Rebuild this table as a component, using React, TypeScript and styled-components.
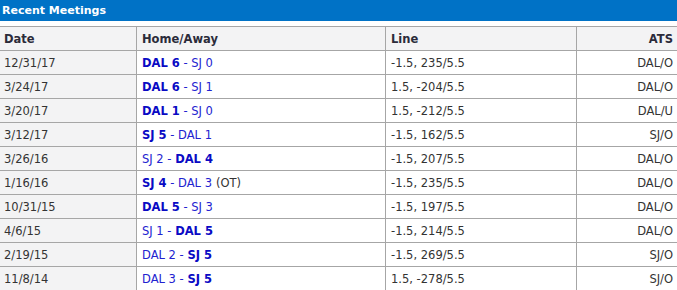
import React from "react";
import styled, { createGlobalStyle } from "styled-components";

const Global = createGlobalStyle`
  html, body { margin: 0; padding: 0; background: #fff; }
  body { font-family: "DejaVu Sans", Verdana, sans-serif; font-size: 11.5px; color: #333; }
`;

const Wrap = styled.div`
  width: 677px;
`;

const TitleBar = styled.div`
  height: 21px;
  background: #0072c6;
  color: #fff;
  font-weight: bold;
  font-size: 11px;
  display: flex;
  align-items: center;
  padding-left: 2px;
  margin-bottom: 5px;
`;

const Grid = styled.div`
  display: grid;
  grid-template-columns: 137px 249px 191px 1fr;
  border-top: 1px solid #a6a6a6;
`;

const Cell = styled.div<{ $head?: boolean; $gray?: boolean; $right?: boolean; $last?: boolean }>`
  height: 23px;
  display: flex;
  align-items: center;
  justify-content: ${(p) => (p.$right ? "flex-end" : "flex-start")};
  padding: ${(p) => (p.$right ? "0 4px 0 0" : "0 0 0 5px")};
  border-bottom: 1px solid #a6a6a6;
  border-right: ${(p) => (p.$last ? "none" : "1px solid #a6a6a6")};
  background: ${(p) => (p.$head || p.$gray ? "#f3f3f4" : "#fff")};
  font-weight: ${(p) => (p.$head ? "bold" : "normal")};
  color: ${(p) => (p.$head ? "#2b2b3a" : "#333")};
  white-space: nowrap;
`;

const DateCell = styled(Cell)`
  padding-left: 4px;
`;

const Link = styled.a`
  color: #2222d0;
  text-decoration: none;
  b { color: #0a0ac4; }
`;

const Extra = styled.span`
  color: #333;
  margin-left: 4px;
`;

type Side = { team: string; score: number; win: boolean };
type Row = { date: string; home: Side; away: Side; ot?: boolean; line: string; ats: string };

const rows: Row[] = [
  { date: "12/31/17", home: { team: "DAL", score: 6, win: true }, away: { team: "SJ", score: 0, win: false }, line: "-1.5, 235/5.5", ats: "DAL/O" },
  { date: "3/24/17", home: { team: "DAL", score: 6, win: true }, away: { team: "SJ", score: 1, win: false }, line: "1.5, -204/5.5", ats: "DAL/O" },
  { date: "3/20/17", home: { team: "DAL", score: 1, win: true }, away: { team: "SJ", score: 0, win: false }, line: "1.5, -212/5.5", ats: "DAL/U" },
  { date: "3/12/17", home: { team: "SJ", score: 5, win: true }, away: { team: "DAL", score: 1, win: false }, line: "-1.5, 162/5.5", ats: "SJ/O" },
  { date: "3/26/16", home: { team: "SJ", score: 2, win: false }, away: { team: "DAL", score: 4, win: true }, line: "-1.5, 207/5.5", ats: "DAL/O" },
  { date: "1/16/16", home: { team: "SJ", score: 4, win: true }, away: { team: "DAL", score: 3, win: false }, ot: true, line: "-1.5, 235/5.5", ats: "DAL/O" },
  { date: "10/31/15", home: { team: "DAL", score: 5, win: true }, away: { team: "SJ", score: 3, win: false }, line: "-1.5, 197/5.5", ats: "DAL/O" },
  { date: "4/6/15", home: { team: "SJ", score: 1, win: false }, away: { team: "DAL", score: 5, win: true }, line: "-1.5, 214/5.5", ats: "DAL/O" },
  { date: "2/19/15", home: { team: "DAL", score: 2, win: false }, away: { team: "SJ", score: 5, win: true }, line: "-1.5, 269/5.5", ats: "SJ/O" },
  { date: "11/8/14", home: { team: "DAL", score: 3, win: false }, away: { team: "SJ", score: 5, win: true }, line: "1.5, -278/5.5", ats: "SJ/O" },
];

const SideText = ({ s }: { s: Side }) =>
  s.win ? <b>{`${s.team} ${s.score}`}</b> : <>{`${s.team} ${s.score}`}</>;

export default function App() {
  return (
    <Wrap>
      <Global />
      <TitleBar>Recent Meetings</TitleBar>
      <Grid>
        <DateCell $head>Date</DateCell>
        <Cell $head>Home/Away</Cell>
        <Cell $head>Line</Cell>
        <Cell $head $right $last>ATS</Cell>
        {rows.map((r, i) => (
          <React.Fragment key={i}>
            <DateCell $gray>{r.date}</DateCell>
            <Cell>
              <Link href="#">
                <SideText s={r.home} /> - <SideText s={r.away} />
              </Link>
              {r.ot && <Extra>(OT)</Extra>}
            </Cell>
            <Cell>{r.line}</Cell>
            <Cell $right $last>{r.ats}</Cell>
          </React.Fragment>
        ))}
      </Grid>
    </Wrap>
  );
}
